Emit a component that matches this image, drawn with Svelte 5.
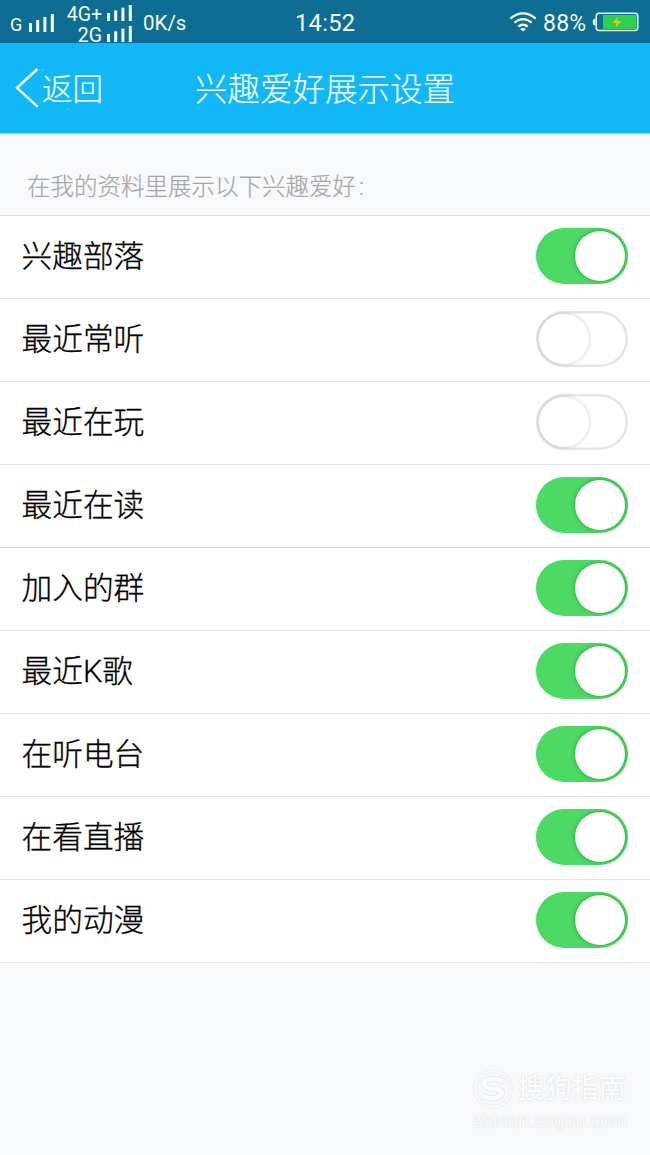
<script>
  let items = $state([
    { label: '兴趣部落', on: true },
    { label: '最近常听', on: false },
    { label: '最近在玩', on: false },
    { label: '最近在读', on: true },
    { label: '加入的群', on: true },
    { label: '最近K歌', on: true },
    { label: '在听电台', on: true },
    { label: '在看直播', on: true },
    { label: '我的动漫', on: true }
  ]);
</script>

{#snippet signal(w, h)}
  <svg width={w} height={h} viewBox="0 0 25 18" preserveAspectRatio="none" fill="#f2fdff">
    <rect x="0" y="9" width="3" height="9" />
    <rect x="7.2" y="6" width="3" height="12" />
    <rect x="14.4" y="3" width="3" height="15" />
    <rect x="21.8" y="0" width="3" height="18" />
  </svg>
{/snippet}

<div class="screen">
  <div class="status">
    <div class="carrier">
      <span class="g">G</span>
      {@render signal(25, 18)}
    </div>
    <div class="dual">
      <div class="line"><span>4G+</span>{@render signal(25, 16)}</div>
      <div class="line"><span>2G</span>{@render signal(25, 16)}</div>
    </div>
    <span class="speed">0K/s</span>
    <span class="time">14:52</span>
    <div class="right">
      <svg width="28" height="20" viewBox="0 0 28 20" fill="none" stroke="#f2fdff" stroke-width="2.3">
        <path d="M1.3 6.6Q14 -3.8 26.7 6.6" />
        <path d="M5.4 10.7Q14 3.6 22.6 10.7" />
        <path d="M9.2 14.6Q14 10.8 18.8 14.6" />
        <path d="M11 16.9Q14 14.9 17 16.9L14 19.4Z" fill="#f2fdff" stroke="none" />
      </svg>
      <span class="percent">88%</span>
      <svg width="47" height="20" viewBox="0 0 47 20">
        <path d="M3.4 6.5Q.8 6.5 .8 10T3.4 13.5Z" fill="#f2fdff" />
        <rect x="4.2" y="1.2" width="41.6" height="17.4" rx="3" fill="none" stroke="#e4f6f8" stroke-width="1.5" />
        <rect x="11" y="3" width="33.5" height="14" fill="#2ed14f" />
        <path d="M26.7 4.3L20.5 11H24.5L23.3 15.8L29.6 8.9H25.3Z" fill="#dfc51c" />
      </svg>
    </div>
  </div>

  <header>
    <div class="back">
      <svg width="24" height="42" viewBox="0 0 24 42" fill="none" stroke="#effbff" stroke-width="2.5">
        <path d="M22.5 2L2 20.8L22.5 39.6" />
      </svg>
      <span>返回</span>
    </div>
    <h1>兴趣爱好展示设置</h1>
  </header>

  <p class="note">在我的资料里展示以下兴趣爱好<span>:</span></p>

  <div class="list">
    {#each items as item, i}
      <div class="row" class:strong={i === 3}>
        <span class="label">{item.label}</span>
        <button
          class="switch"
          class:on={item.on}
          role="switch"
          aria-checked={item.on}
          aria-label={item.label}
          onclick={() => (item.on = !item.on)}
        ><i></i></button>
      </div>
    {/each}
  </div>

  <footer>
    <div class="brand">
      <svg width="40" height="40" viewBox="0 0 40 40" fill="none">
        <circle cx="20" cy="20" r="17.8" stroke="#eceef0" stroke-width="4" />
        <circle cx="20" cy="20" r="17.8" stroke="#fbfcfd" stroke-width="2" />
        <path d="M31 12.5Q20 8 13 11.5C8 15 12 18.5 20 19.5C30 20.5 31 24 26 27.5Q19 31 9 27" stroke="#e9ebed" stroke-width="6.5" />
        <path d="M30.5 12.5Q20 8 13 11.5C8 15 12 18.5 20 19.5C30 20.5 31 24 26 27.5Q19 31 9.5 27" stroke="#fbfcfd" stroke-width="4.5" />
      </svg>
      <span>搜狗指南</span>
    </div>
    <div class="site">zhinan.sogou.com</div>
  </footer>
</div>

<style>
  :global(body) {
    margin: 0;
    background: #f8f9fb;
  }
  .screen {
    width: 650px;
    height: 1155px;
    display: flex;
    flex-direction: column;
    overflow: hidden;
    background: #f8f9fb;
    font-family: Roboto, 'Noto Sans CJK SC', sans-serif;
    font-weight: 300;
  }
  .status {
    height: 43px;
    flex: none;
    display: grid;
    grid-template-columns: 54px 78px 163px 1fr auto;
    background: #0d6d92;
    color: #f2fdff;
    font-family: Roboto, sans-serif;
    font-weight: 400;
    line-height: 1;
  }
  .carrier {
    display: flex;
    align-items: flex-end;
    gap: 6px;
    height: 32px;
    padding-left: 10px;
    box-sizing: border-box;
  }
  .g {
    font-size: 18px;
    width: 13px;
    line-height: 14px;
  }
  .dual {
    padding-top: 2px;
  }
  .line {
    display: flex;
    align-items: center;
    justify-content: flex-end;
    gap: 5px;
    height: 21px;
    font-size: 19.5px;
    letter-spacing: 0;
  }
  .line span {
    line-height: 17px;
    padding-top: 4px;
  }
  .speed {
    font-size: 20.5px;
    padding: 13px 0 0 11px;
  }
  .time {
    font-size: 23.7px;
    padding-top: 12px;
    letter-spacing: 0.3px;
  }
  .right {
    display: flex;
    align-items: center;
    height: 43px;
    padding-right: 11px;
  }
  .percent {
    font-size: 23px;
    padding-top: 3px;
    width: 49px;
    margin-left: 6px;
    letter-spacing: 0.2px;
  }
  header {
    height: 90px;
    flex: none;
    display: grid;
    grid-template-columns: 195px 1fr;
    align-items: center;
    background: #12b7f5;
    color: #effbff;
    border-bottom: 1px solid #8fd9f7;
  }
  .back {
    display: flex;
    align-items: center;
    padding-left: 15px;
    gap: 3px;
    font-size: 30.5px;
    line-height: 44px;
  }
  .back span,
  h1 {
    padding-top: 4px;
  }
  .back span,
  h1,
  .note {
    -webkit-text-stroke: 0.2px currentColor;
  }
  h1 {
    margin: 0;
    font-size: 32.5px;
    font-weight: 300;
    line-height: 44px;
  }
  .note {
    margin: 0;
    height: 81px;
    flex: none;
    box-sizing: border-box;
    padding: 36px 0 0 27px;
    font-size: 23.5px;
    line-height: 34px;
    color: #a5a6a8;
  }
  .note span {
    padding-left: 3px;
  }
  .list {
    flex: none;
    background: #fff;
    border-top: 1px solid #dedfe1;
  }
  .row {
    height: 83px;
    box-sizing: border-box;
    border-bottom: 1px solid #e4e5e6;
    display: flex;
    align-items: center;
    justify-content: space-between;
    padding: 0 22px 2px 21.5px;
  }
  .row.strong {
    border-bottom-color: #d2d3d5;
  }
  .label {
    font-size: 30.7px;
    line-height: 44px;
    padding-top: 2px;
    color: #000;
    -webkit-text-stroke: 0.3px currentColor;
  }
  .switch {
    width: 92px;
    height: 56px;
    padding: 3px;
    border: 0;
    border-radius: 28px;
    background: #fff;
    box-shadow: inset 0 0 0 2.5px #e5e5e5;
    display: flex;
    align-items: center;
  }
  .switch i {
    width: 50px;
    height: 50px;
    border-radius: 50%;
    background: #fff;
    box-shadow: 0 0 4px rgba(0, 0, 0, 0.22);
  }
  .switch.on {
    justify-content: flex-end;
    background: #4cd964;
    box-shadow: none;
  }
  .switch.on i {
    box-shadow: 0 0 4px rgba(0, 60, 10, 0.4);
  }
  footer {
    margin-top: auto;
    align-self: flex-end;
    padding: 0 23px 22px 0;
    color: #fbfcfd;
    text-shadow: 0 0 2px #d9dbdd, 0 0 1px #e2e4e6;
    font-weight: 500;
  }
  .brand {
    display: flex;
    align-items: center;
    gap: 5px;
    font-size: 27px;
    line-height: 40px;
  }
  .site {
    font-family: 'Liberation Sans', sans-serif;
    font-size: 19px;
    line-height: 24px;
    font-weight: 400;
  }
</style>
